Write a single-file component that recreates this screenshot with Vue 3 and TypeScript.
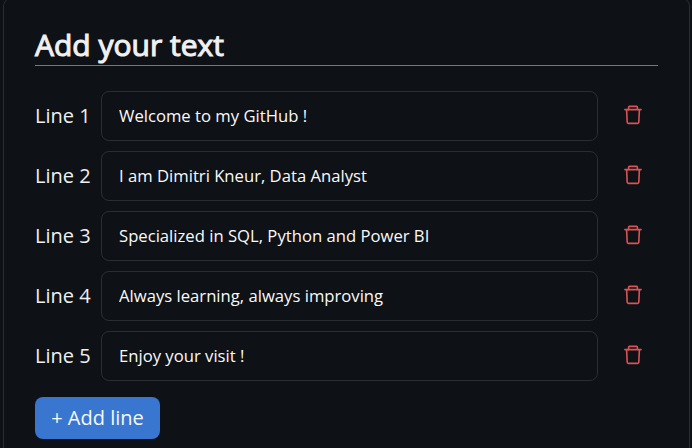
<script setup lang="ts">
import { ref } from 'vue'

const lines = ref<string[]>([
  'Welcome to my GitHub !',
  'I am Dimitri Kneur, Data Analyst',
  'Specialized in SQL, Python and Power BI',
  'Always learning, always improving',
  'Enjoy your visit !',
])

function addLine(): void {
  lines.value.push('')
}

function removeLine(index: number): void {
  lines.value.splice(index, 1)
}
</script>

<template>
  <main class="page">
    <section class="card">
      <h2 class="title">Add your text</h2>
      <div class="rows">
        <div v-for="(_, i) in lines" :key="i" class="row">
          <label class="label" :for="`line-${i + 1}`">Line {{ i + 1 }}</label>
          <input :id="`line-${i + 1}`" v-model="lines[i]" class="field" type="text" />
          <button class="remove" type="button" @click="removeLine(i)">
            <svg width="18" height="20" viewBox="0 0 18 20" fill="none" stroke="currentColor" stroke-width="1.6" stroke-linejoin="round" stroke-linecap="round">
              <path d="M0.9 4.6H17.1" />
              <path d="M4.6 4.4V2.2Q4.6 1.4 5.4 1.4H12.6Q13.4 1.4 13.4 2.2V4.4" />
              <path d="M2.6 4.8L3.2 17.3Q3.3 18.4 4.4 18.4H13.6Q14.7 18.4 14.8 17.3L15.4 4.8" />
            </svg>
          </button>
        </div>
      </div>
      <button class="add" type="button" @click="addLine">+ Add line</button>
    </section>
  </main>
</template>

<style>
body {
  background: #0e1116;
}
</style>

<style scoped>
.page {
  box-sizing: border-box;
  height: 448px;
  padding: 0 2px 0 3px;
  overflow: hidden;
  font-family: 'Open Sans', 'Noto Sans', sans-serif;
  color: #f0f0f0;
}

.card {
  box-sizing: border-box;
  height: 480px;
  margin-top: -2px;
  padding: 30px 31px;
  border: 1px solid #2a2d32;
  border-radius: 8px;
}

.title {
  box-sizing: border-box;
  height: 37px;
  margin: 0;
  border-bottom: 1px solid #737977;
  font-size: 30px;
  font-weight: 400;
  line-height: 32px;
  -webkit-text-stroke: 1.1px currentColor;
}

.rows {
  display: flex;
  flex-direction: column;
  gap: 10px;
  margin-top: 25px;
}

.row {
  display: grid;
  grid-template-columns: 66px 497px 1fr;
  align-items: center;
  height: 50px;
}

.label {
  font-size: 20px;
  line-height: 28px;
}

.field {
  box-sizing: border-box;
  width: 100%;
  height: 50px;
  padding: 0 17px 2px;
  border: 1px solid #2a2d32;
  border-radius: 8px;
  outline: none;
  background: transparent;
  color: #fafafa;
  font-family: inherit;
  font-size: 16.67px;
}

.remove {
  display: flex;
  margin: 0 0 2px 26px;
  padding: 0;
  border: 0;
  background: none;
  color: #d95555;
}

.add {
  display: block;
  width: 125px;
  height: 42px;
  margin-top: 16px;
  padding: 0;
  border: 0;
  border-radius: 8px;
  background: #3976d0;
  color: #f5f8fc;
  font-family: inherit;
  font-size: 20px;
  line-height: 28px;
}
</style>
